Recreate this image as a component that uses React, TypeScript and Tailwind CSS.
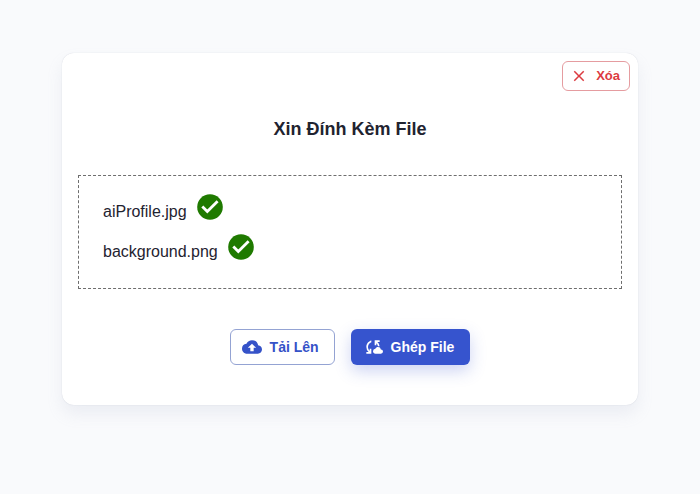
import { MdClose, MdCloudSync, MdCloudUpload } from 'react-icons/md';

const files = ['aiProfile.jpg', 'background.png'];

const CheckIcon = () => {
  return (
    <svg viewBox="0 0 26 26" className="size-[26px]" aria-hidden="true">
      <circle cx="13" cy="13" r="12.8" fill="#1f7a00" />
      <path
        d="M5.3 12.4l5 5L20.6 7.2"
        fill="none"
        stroke="#fff"
        strokeWidth="2.8"
      />
    </svg>
  );
};

const FileRow = ({ name }: { name: string }) => {
  return (
    <li className="flex h-10 items-start gap-[10px]">
      <span className="pt-1 leading-7">{name}</span>
      <CheckIcon />
    </li>
  );
};

export default function App() {
  return (
    <main className="min-h-screen bg-[#f9fafc] px-[62px] py-[53px] font-['Liberation_Sans',Arial,sans-serif] text-[#1f2330]">
      <section className="flex flex-col rounded-xl bg-white pb-10 shadow-[0_0_1px_rgba(34,51,84,0.2),0_9px_16px_rgba(159,162,191,0.14)]">
        <div className="flex justify-end p-2">
          <button
            type="button"
            className="flex h-[30px] items-center gap-2 rounded-md border border-[#e59ca0] pr-[9px] pl-[7px] text-[13px] font-bold text-[#dc3b41]"
          >
            <MdClose className="size-[18px]" />
            Xóa
          </button>
        </div>

        <h1 className="mt-[18px] text-center text-lg leading-6 font-bold">
          Xin Đính Kèm File
        </h1>

        <ul className="mx-4 mt-[34px] border border-dashed border-[#6e6e6e] px-6 pt-[18px] pb-[14px] text-base">
          {files.map((file) => (
            <FileRow key={file} name={file} />
          ))}
        </ul>

        <div className="mt-10 flex justify-center gap-4">
          <button
            type="button"
            className="flex h-9 items-center gap-2 rounded-md border border-[#94a3d3] pr-[15px] pl-[11px] text-sm font-bold text-[#3552c8]"
          >
            <MdCloudUpload className="size-5" />
            Tải Lên
          </button>
          <button
            type="button"
            className="flex h-9 items-center gap-2 rounded-md bg-[#3654ce] pr-4 pl-3 text-sm font-bold text-white shadow-[0_6px_16px_rgba(54,84,206,0.25)]"
          >
            <MdCloudSync className="size-5" />
            Ghép File
          </button>
        </div>
      </section>
    </main>
  );
}
